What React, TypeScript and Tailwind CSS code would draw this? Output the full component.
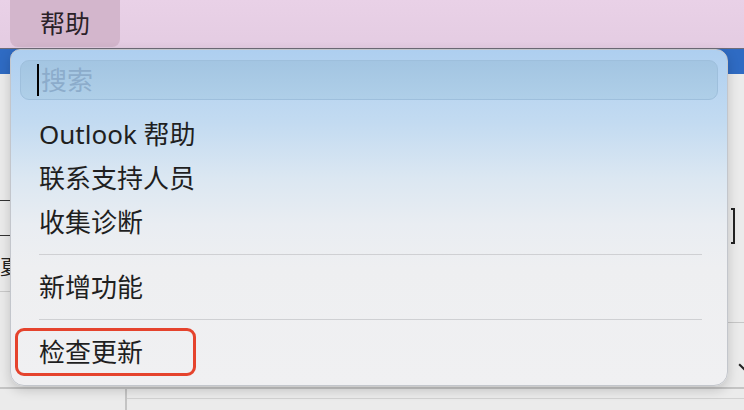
import React from "react";

const font = '"Noto Sans", "Noto Sans CJK SC", sans-serif';

export default function App() {
  return (
    <div className="relative w-[744px] h-[410px] overflow-hidden bg-[#ebebeb] flex flex-col" style={{ fontFamily: font }}>
      {/* menu bar */}
      <div className="h-[48px] shrink-0 bg-gradient-to-b from-[#e9d1e7] to-[#e4cce2] flex items-stretch pl-[10px]">
        <div className="w-[110px] h-[47px] rounded-b-[8px] bg-[#d3b6cc] flex items-center pl-[30px] text-[25px] text-[#2a2128] leading-none">
          帮助
        </div>
      </div>
      <div className="h-[1px] shrink-0 bg-[#6f6d78]" />
      {/* background app */}
      <div className="h-[25px] shrink-0 bg-[#2f6bc3]" />
      <div className="h-[313px] shrink-0 flex">
        <div className="w-[12px] flex flex-col pt-[126px]">
          <div className="h-[1px] bg-[#333]" />
          <div className="h-[34px]" />
          <div className="h-[1px] bg-[#333]" />
          <div className="h-[22px]" />
          <div className="text-[20px] leading-none text-[#222] whitespace-nowrap">夏</div>
          <div className="h-[13px]" />
          <div className="h-[1px] bg-[#c9c9c9]" />
        </div>
        <div className="flex-1" />
        <div className="w-[16px] flex flex-col pt-[134px]">
          <div className="ml-[3px] w-[4px] h-[36px] border-y-2 border-r-2 border-[#222]" />
          <div className="h-[78px]" />
          <div className="h-[1px] bg-[#c6c6c6]" />
          <div className="h-[43px]" />
          <div className="ml-[10px] w-[8px] h-[2px] bg-[#222] rotate-45" />
        </div>
      </div>
      <div className="h-[2px] shrink-0 bg-[#c4c4c4]" />
      <div className="flex-1 flex">
        <div className="w-[125px]" />
        <div className="w-[2px] bg-[#c4c4c4]" />
        <div className="flex-1 flex flex-col pt-[9px]">
          <div className="h-[1px] bg-[#d2d2d2]" />
        </div>
      </div>

      {/* dropdown menu */}
      <div
        className="absolute left-[10px] top-[49px] w-[718px] h-[337px] rounded-tr-[12px] rounded-b-[14px] rounded-tl-[10px] border border-[#c3c6cc] shadow-[0_4px_12px_rgba(0,0,0,0.18)] flex flex-col"
        style={{
          background:
            "linear-gradient(to bottom, #aecff0 0%, #c3dbf1 22%, #dbe7f2 38%, #e9edf2 52%, #eeeff1 65%, #f0f0f2 100%)",
        }}
      >
        <div className="pt-[10px] px-[9px]">
          <div className="h-[40px] rounded-[9px] bg-gradient-to-b from-[#a3c5e2] to-[#afcfe8] border border-[#9ebfdc] flex items-center pl-[16px]">
            <div className="w-[2px] h-[32px] bg-black" />
            <span className="ml-[2px] text-[26px] leading-none text-[#8caccb]">搜索</span>
          </div>
        </div>
        <div className="pl-[28px] pr-[25px] flex flex-col text-[26px] text-[#1f1f1f] leading-none">
          <div className="h-[44px] mt-[12px] flex items-center">Outlook 帮助</div>
          <div className="h-[44px] flex items-center">联系支持人员</div>
          <div className="h-[44px] flex items-center">收集诊断</div>
          <div className="h-[1px] mt-[10px] bg-[#cfd0d3]" />
          <div className="h-[64px] flex items-center">新增功能</div>
          <div className="h-[1px] bg-[#cfd0d3]" />
          <div className="relative h-[64px] flex items-center">
            检查更新
            <div className="absolute left-[-24px] top-[8px] w-[181px] h-[48px] rounded-[9px] border-[3px] border-[#e5432d]" />
          </div>
        </div>
      </div>
    </div>
  );
}
